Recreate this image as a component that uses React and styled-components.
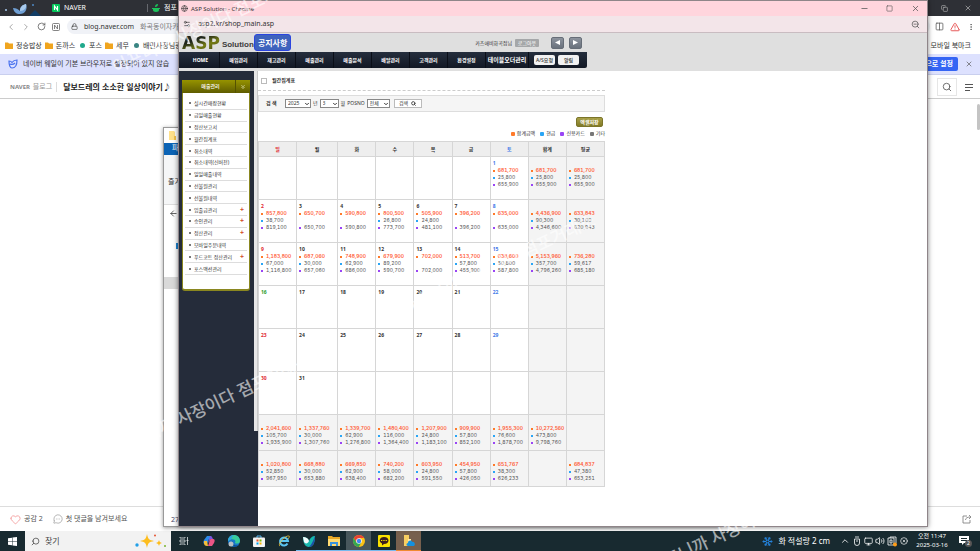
import React from "react";
import styled, { createGlobalStyle } from "styled-components";
import {
  AlertTriangle,
  ArrowLeft,
  ChevronDown,
  ChevronLeft,
  ChevronRight,
  ChevronUp,
  ChevronsDown,
  Columns2,
  Copy,
  Globe,
  Heart,
  Lock,
  MessageCircleMore,
  Minus,
  Monitor,
  MoreVertical,
  RotateCw,
  Search,
  Settings2,
  Snowflake,
  Square,
  Volume2,
  X,
  XCircle,
  ZoomOut,
} from "lucide-react";

const GlobalStyle = createGlobalStyle`
  * {
    box-sizing: border-box;
  }

  body {
    margin: 0;
    overflow: hidden;
    font-family: "Noto Sans", "Noto Sans CJK KR", sans-serif;
    font-size: 7px;
    line-height: 10px;
    color: #333;
  }

  button, input, select {
    font: inherit;
    margin: 0;
    padding: 0;
  }

  button {
    border: none;
    background: none;
    color: inherit;
    cursor: pointer;
  }

  a {
    color: inherit;
    text-decoration: none;
  }

  svg {
    flex: none;
    display: block;
  }
`;

const Screen = styled.div`
  position: relative;
  display: flex;
  flex-direction: column;
  height: 100vh;
  overflow: hidden;
`;

const Desktop = styled.div`
  position: relative;
  flex: 1;
  min-height: 0;
  display: flex;
`;

const Spacer = styled.span`
  flex: 1;
`;

const IconButton = styled.button`
  display: flex;
  align-items: center;
  justify-content: center;
  width: ${(p) => p.$width || 16}px;
  height: 12px;
  flex: none;
  color: ${(p) => p.$color || "#555"};
`;

/* Browser behind the popup */
const Browser = styled.div`
  flex: 1;
  min-width: 0;
  display: flex;
  flex-direction: column;
  background: #fff;
`;

const Bar = styled.div`
  display: flex;
  align-items: center;
  flex: none;
  white-space: nowrap;
`;

const TabBar = styled(Bar)`
  height: 16px;
  background: #2e3036;
  color: #fff;
`;

const WhaleBox = styled.div`
  display: flex;
  width: 52px;
`;

const Tab = styled.div`
  display: flex;
  align-items: center;
  gap: 4px;
  width: ${(p) => p.$width}px;
  height: 8px;
  border-right: 1px solid #66686e;
`;

const AddressBar = styled(Bar)`
  height: 21px;
  padding-left: 3px;
`;

const AddressField = styled.div`
  display: flex;
  align-items: center;
  flex: 1;
  gap: 6px;
  height: 15px;
  margin-left: 4px;
  padding-left: 4px;
  border-radius: 8px;
  background: #f0f2f7;
  color: #333;

  span {
    color: #777;
  }
`;

const BookmarkBar = styled(Bar)`
  height: 17px;
  padding: 0 9px 0 5px;
  gap: 3px;
`;

const Bookmark = styled.a`
  display: flex;
  align-items: center;
  gap: 3px;
`;

const Dot = styled.i`
  width: 5px;
  height: 5px;
  margin: 0 1px 0 2px;
  border-radius: 50%;
  background: ${(p) => p.$color};
`;

const NoticeBar = styled(Bar)`
  height: 21px;
  padding: 0 5px 0 8px;
  gap: 5px;
  border-bottom: 1px solid #c9cfee;
  background: #dde1fe;
`;

const PrimaryButton = styled.button`
  height: 14px;
  padding: 0 5px;
  border-radius: 2px;
  background: #3565f4;
  color: #fff;
  font-weight: 600;
`;

const BlogHeader = styled(Bar)`
  height: 24px;
  padding-left: 10px;
  border-bottom: 1px solid #ccc;
`;

const BlogBrand = styled.span`
  padding-right: 4px;
  border-right: 1px solid #ddd;
  color: #999;

  b {
    margin-right: 1px;
    font-size: 6px;
    color: #888;
  }
`;

const BlogTitle = styled.h1`
  margin: 0 0 0 6px;
  font-size: 8px;
  font-weight: 700;
  color: #222;
`;

const SearchBox = styled.div`
  display: flex;
  align-items: center;
  height: 18px;
  border: 1px solid #e6e6e6;
`;

const BlogContent = styled.div`
  flex: 1;
  display: flex;
  justify-content: flex-end;
  padding: 5px 0;
`;

const ScrollThumb = styled.div`
  width: 3px;
  height: 26px;
  border-radius: 2px;
  background: #c4c4c4;
`;

const BlogFooter = styled(Bar)`
  height: 25px;
  padding: 0 8px 0 10px;
  gap: 2px;
  border-top: 1px solid #ddd;
  color: #555;
`;

const FooterLink = styled.a`
  display: flex;
  align-items: center;
  gap: 3px;
  margin-right: 8px;
`;

/* File explorer, mostly covered */
const Explorer = styled.div`
  position: absolute;
  left: 163px;
  top: 127px;
  right: 260px;
  bottom: 4px;
  display: flex;
  flex-direction: column;
  border: 1px solid #999;
  background: #fff;
  box-shadow: 0 1px 4px rgba(0, 0, 0, 0.4);
  overflow: hidden;
`;

const ExplorerTitle = styled.div`
  display: flex;
  align-items: center;
  height: 15px;
  padding-left: 5px;
`;

const ExplorerTab = styled.div`
  height: 12px;
  padding-left: 8px;
  background: #0b63b5;
  color: #fff;
`;

const ExplorerRibbon = styled.div`
  height: 50px;
  padding: 22px 0 0 4px;
  border-bottom: 1px solid #ddd;
  background: #f5f6f7;
`;

const ExplorerNav = styled.div`
  display: flex;
  flex-direction: column;
  justify-content: space-between;
  height: 72px;
  padding: 4px 4px 28px 5px;
`;

const ExplorerMark = styled.div`
  width: 6px;
  height: 6px;
  margin-left: 7px;
  background: #1d84d2;
`;

const ExplorerRow = styled.div`
  height: 12px;
  background: #d9d9d9;
`;

const ExplorerStatus = styled.div`
  margin-top: auto;
  padding: 0 0 1px 7px;
  color: #446;
`;

/* Popup window */
const Popup = styled.div`
  position: absolute;
  left: 178px;
  top: 0;
  right: 52px;
  bottom: 4px;
  display: flex;
  flex-direction: column;
  border: 1px solid #8f8589;
  background: #fff;
  box-shadow: 0 0 5px rgba(0, 0, 0, 0.5);
`;

const PopupTitle = styled(Bar)`
  height: 15px;
  padding: 0 0 0 2px;
  gap: 3px;
  background: #ffd5dd;
  font-size: 6px;
`;

const PopupAddress = styled(Bar)`
  height: 17px;
  padding: 0 4px;
  gap: 7px;
  border-bottom: 1px solid #c9bcc1;
  background: #f3e5e9;
`;

const SiteHeader = styled.header`
  flex: none;
  height: 38px;
  background: #dfdfdf;
`;

const HeaderTop = styled.div`
  display: flex;
  align-items: center;
  height: 19px;
  width: 408px;
  padding: 0 5px 0 3px;
  font-size: 5px;
`;

const Logo = styled.a`
  display: flex;
  align-items: center;
  gap: 2px;
  color: #3c3c3c;
`;

const LogoMark = styled.strong`
  background: linear-gradient(160deg, #20261c 35%, #747b14 60%, #3d4215);
  background-clip: text;
  color: transparent;
  font: 700 17px/20px "DejaVu Sans", sans-serif;
`;

const LogoName = styled.span`
  padding-top: 4px;
  font: 700 8px/12px "Liberation Sans", sans-serif;
`;

const NoticeButton = styled.button`
  height: 17px;
  padding: 0 3px;
  border: 1px solid #2b45df;
  border-radius: 3px;
  background: #3e63bd;
  color: #fff;
  font-size: 8px;
  font-weight: 700;
`;

const LogoutButton = styled.button`
  width: 24px;
  height: 8px;
  margin: 0 7px 0 3px;
  border-radius: 1px;
  background: #a5a7a9;
  color: #fff;
  line-height: 8px;
`;

const ArrowButton = styled.button`
  display: flex;
  align-items: center;
  justify-content: center;
  width: 13px;
  height: 12px;
  margin-left: 5px;
  border: 1px solid #666d77;
  border-radius: 2px;
  background: linear-gradient(#8c939d, #69717c);
`;

const SiteNav = styled.nav`
  display: flex;
  align-items: center;
  width: 408px;
  height: 16px;
  padding-left: 3px;
  border-radius: 0 0 2px 0;
  background: linear-gradient(#252e3d, #121824);
  color: #fff;
  font-size: 5px;
  font-weight: 700;
`;

const NavLink = styled.a`
  width: ${(p) => (p.$wide ? 43 : 38)}px;
  height: 16px;
  border-right: 1px solid #0a0e17;
  font-size: ${(p) => (p.$wide ? 6 : 5)}px;
  line-height: 16px;
  text-align: center;
  white-space: nowrap;
`;

const NavButton = styled.button`
  width: 21px;
  height: 10px;
  margin-left: ${(p) => p.$gap}px;
  border-radius: 2px;
  background: #f2f2f2;
  color: #333;
  font-weight: 500;
`;

const SiteBody = styled.div`
  flex: 1;
  min-height: 0;
  display: flex;
`;

const Sidebar = styled.aside`
  display: flex;
  flex: none;
  width: 79px;
  background: #252c3a;
`;

const SideInner = styled.div`
  flex: 1;
  padding: 9px 4px 0 3px;
  font-size: 5px;
`;

const SideHandle = styled.div`
  width: 4px;
  height: 360px;
  border-right: 1px solid #c8c8c8;
  background: #e6e6e6;
`;

const SideTitle = styled.div`
  display: flex;
  align-items: center;
  height: 13px;
  background: linear-gradient(#969300, #5f5c00);
  color: #fff;
  font-weight: 500;

  span {
    flex: 1;
    padding-left: 4px;
    border-right: 1px solid #555200;
    line-height: 13px;
    text-align: center;
  }
`;

const SideList = styled.ul`
  display: grid;
  grid-auto-rows: 1fr;
  height: 198px;
  margin: 0;
  padding: 5px 2px 14px 2px;
  border: 1px solid #8a8720;
  border-top: none;
  border-bottom-width: 2px;
  border-radius: 0 0 3px 3px;
  background: #fff;
  list-style: none;
`;

const SideItem = styled.li`
  display: flex;
  align-items: center;
  gap: 3px;
  padding: 0 3px 0 4px;
  border-bottom: 1px solid #ddd;
  white-space: nowrap;

  &::before {
    content: "";
    width: 2px;
    height: 2px;
    background: #777;
  }

  b {
    margin-left: auto;
    color: #d2491f;
    font-size: 7px;
  }
`;

const Main = styled.main`
  flex: 1;
  max-width: 347px;
  font-size: 5px;
  line-height: 7px;
`;

const PageTitle = styled.label`
  display: flex;
  align-items: center;
  gap: 5px;
  height: 20px;
  padding-left: 3px;
  border-bottom: 1px dashed #ccc;
  font-weight: 700;
`;

const Checkbox = styled.input`
  appearance: none;
  width: 6px;
  height: 6px;
  border: 1px solid #bbb;
  background: #fff;
`;

const SearchForm = styled.form`
  display: flex;
  align-items: center;
  gap: 2px;
  height: 17px;
  margin-top: 4px;
  padding-left: 7px;
  border: 1px solid #ddd;
  background: #f5f5f5;
`;

const FormTitle = styled.b`
  width: 17px;
`;

const SelectWrap = styled.label`
  display: flex;
  align-items: center;
  gap: 2px;
`;

const SelectBox = styled.span`
  position: relative;

  svg {
    position: absolute;
    right: 1px;
    top: 2px;
    pointer-events: none;
  }
`;

const Select = styled.select`
  appearance: none;
  display: block;
  width: ${(p) => p.$width}px;
  height: 9px;
  padding: 0 2px;
  border: 1px solid #888;
  border-radius: 0;
  background: #fff;
  color: #333;
  line-height: 7px;
`;

const SearchButton = styled.button`
  display: flex;
  align-items: center;
  justify-content: center;
  gap: 3px;
  width: 28px;
  height: 9px;
  margin-left: 2px;
  border: 1px solid #bbb;
  background: #fff;
`;

const ExcelRow = styled.div`
  display: flex;
  justify-content: flex-end;
  padding: 5px 2px 0 0;
`;

const ExcelButton = styled.button`
  width: 27px;
  height: 10px;
  border: 1px solid #7b7529;
  border-radius: 2px;
  background: linear-gradient(#a8a048, #817a26);
  color: #fff;
  font-weight: 700;
  line-height: 8px;
`;

const Legend = styled.ul`
  display: flex;
  justify-content: flex-end;
  gap: 5px;
  margin: 0;
  padding: 3px 0 4px;
  list-style: none;
`;

const LegendItem = styled.li`
  display: flex;
  align-items: center;
  gap: 2px;

  &::before {
    content: "";
    width: 4px;
    height: 4px;
    border-radius: 1px;
    background: ${(p) => p.$color};
  }
`;

const Calendar = styled.table`
  width: 100%;
  table-layout: fixed;
  border-collapse: collapse;

  th, td {
    border: 1px solid #d6d6d6;
  }
`;

const DayHead = styled.th`
  width: ${(p) => (p.$wide ? 41 : 38)}px;
  height: 15px;
  padding: 0;
  background: #eee;
  color: ${(p) => p.$color || "#333"};
`;

const DayCell = styled.td`
  height: ${(p) => (p.$short ? 36 : 43)}px;
  padding: 2px 0 0 2px;
  background: ${(p) => (p.$shaded ? "#f4f4f4" : "#fff")};
  vertical-align: top;
`;

const DayNumber = styled.div`
  height: 8px;
  font-weight: 700;
  line-height: 8px;
  color: ${(p) => p.$color};
`;

const Amount = styled.div`
  display: flex;
  align-items: center;
  gap: 3px;
  height: 7px;
  font-family: Inter, sans-serif;
  font-variant-numeric: tabular-nums;
  color: ${(p) => (p.$total ? "#ff5a35" : "#555")};
  font-weight: ${(p) => (p.$total ? 600 : 400)};

  &::before {
    content: "";
    width: 2px;
    height: 2px;
    background: ${(p) => p.$dot};
  }
`;

/* Taskbar */
const Taskbar = styled.div`
  display: flex;
  align-items: stretch;
  flex: none;
  height: 20px;
  background: #182a30;
  color: #fff;
`;

const StartButton = styled.button`
  display: flex;
  align-items: center;
  justify-content: center;
  width: 25px;
`;

const TaskSearch = styled.label`
  display: flex;
  align-items: center;
  gap: 5px;
  width: 146px;
  padding: 0 4px 0 6px;
  background: #f2f2f2;
  color: #444;
  font-size: 8px;

  svg:first-child {
    transform: scaleX(-1);
  }

  input {
    flex: 1;
    min-width: 0;
    border: none;
    outline: none;
    background: transparent;

    &::placeholder {
      color: #444;
      opacity: 1;
    }
  }
`;

const TaskButton = styled.button`
  display: flex;
  align-items: center;
  justify-content: center;
  width: 25px;
  border-bottom: 1px solid ${(p) => p.$line || "transparent"};
  background: ${(p) => p.$bg || "transparent"};
`;

const Tray = styled.div`
  display: flex;
  align-items: center;
  gap: 2px;
  margin-left: auto;
  padding-right: 8px;
`;

const Weather = styled.span`
  display: flex;
  align-items: center;
  gap: 5px;
  margin-right: 8px;
  font-size: 8px;
`;

const Clock = styled.div`
  width: 44px;
  font-size: 6px;
  line-height: 9px;
  text-align: center;
`;

const Notifications = styled.button`
  position: relative;
  display: flex;
  width: 16px;
  justify-content: center;

  span {
    position: absolute;
    right: 0;
    top: 4px;
    width: 7px;
    height: 7px;
    border-radius: 50%;
    background: #555;
    color: #fff;
    font-size: 5px;
    line-height: 7px;
  }
`;

const Watermark = styled.div`
  position: absolute;
  left: ${(p) => p.$x}px;
  top: ${(p) => p.$y}px;
  transform: rotate(-25deg);
  transform-origin: 0 100%;
  color: rgba(255, 255, 255, 0.6);
  font-size: 17px;
  font-weight: 500;
  line-height: 20px;
  white-space: nowrap;
  pointer-events: none;
`;

const RED = "#e0262c";
const BLUE = "#3f78e8";
const GREEN = "#1f9b2d";
const DOTS = ["#ff7a2a", "#2aa5f5", "#9a45f5"];

const days = ["일", "월", "화", "수", "목", "금", "토", "합계", "평균"];

const first = ["681,700", "25,800", "655,900"];

const weeks = [
  {
    dates: ["", "", "", "", "", "", "1"],
    amounts: { 6: first, 7: first, 8: first },
  },
  {
    dates: ["2", "3", "4", "5", "6", "7", "8"],
    amounts: [
      ["857,800", "38,700", "819,100"],
      ["650,700", "", "650,700"],
      ["590,800", "", "590,800"],
      ["800,500", "26,800", "773,700"],
      ["505,900", "24,800", "481,100"],
      ["396,200", "", "396,200"],
      ["635,000", "", "635,000"],
      ["4,436,900", "90,300", "4,346,600"],
      ["633,843", "30,100", "620,943"],
    ],
  },
  {
    dates: ["9", "10", "11", "12", "13", "14", "15"],
    amounts: [
      ["1,183,800", "67,000", "1,116,800"],
      ["687,060", "30,000", "657,060"],
      ["748,900", "62,900", "686,000"],
      ["679,900", "89,200", "590,700"],
      ["702,000", "", "702,000"],
      ["513,700", "57,800", "455,900"],
      ["638,600", "50,800", "587,800"],
      ["5,153,960", "357,700", "4,796,260"],
      ["736,280", "59,617", "685,180"],
    ],
  },
  { dates: ["16", "17", "18", "19", "20", "21", "22"], amounts: [] },
  { dates: ["23", "24", "25", "26", "27", "28", "29"], amounts: [] },
  { dates: ["30", "31", "", "", "", "", ""], amounts: [] },
  {
    summary: true,
    dates: [],
    amounts: [
      ["2,041,600", "105,700", "1,935,900"],
      ["1,337,760", "30,000", "1,307,760"],
      ["1,339,700", "62,900", "1,276,800"],
      ["1,480,400", "116,000", "1,364,400"],
      ["1,207,900", "24,800", "1,183,100"],
      ["909,900", "57,800", "852,100"],
      ["1,955,300", "76,600", "1,878,700"],
      ["10,272,560", "473,800", "9,798,760"],
    ],
  },
  {
    summary: true,
    dates: [],
    amounts: [
      ["1,020,800", "52,850", "967,950"],
      ["668,880", "30,000", "653,880"],
      ["669,850", "62,900", "638,400"],
      ["740,200", "58,000", "682,200"],
      ["603,950", "24,800", "591,550"],
      ["454,950", "57,800", "426,050"],
      ["651,767", "38,300", "626,233"],
      null,
      ["684,837", "47,380", "653,251"],
    ],
  },
];

const navItems = ["HOME", "매입관리", "재고관리", "매출관리", "매출분석", "배달관리", "고객관리", "환경설정"];

const sideItems = [
  "실시간매장현황",
  "금일매출현황",
  "정산보고서",
  "월간집계표",
  "취소내역",
  "취소내역(신버전)",
  "일일매출내역",
  "선불원관리",
  "선불원내역",
  "입출금관리",
  "승인관리",
  "정산관리",
  "모바일주문내역",
  "푸드코트 정산관리",
  "포스액션관리",
];
const expandable = ["입출금관리", "승인관리", "정산관리", "푸드코트 정산관리"];

const legend = [
  ["합계금액", "#ff7a2a"],
  ["현금", "#2aa5f5"],
  ["신용카드", "#9a45f5"],
  ["기타", "#777"],
];

const marks = [
  [118, 57],
  [121, 438],
  [406, 298],
  [655, 557],
];

function dateColor(date, column) {
  if (date === "16") return GREEN;
  if (column === 0) return RED;
  if (column === 6) return BLUE;
  return "#333";
}

function FolderIcon({ color = "#f0a51f" }) {
  return (
    <svg width="8" height="7" viewBox="0 0 8 7">
      <path d="M0 0.500h3l1 1h4V7H0z" fill={color} />
    </svg>
  );
}

function DocumentsIcon() {
  return (
    <svg width="8" height="9" viewBox="0 0 8 9">
      <path d="M0 0h5l1 1v8H0z" fill="#ffe08a" />
      <path d="M5 5h2v4H5z" fill="#f3c24d" />
    </svg>
  );
}

function WhaleIcon() {
  return (
    <svg width="44" height="16" viewBox="0 0 44 16">
      <path d="M29 16l6-6 6 6z" fill="#123d66" />
      <circle cx="6" cy="10" r="1" fill="#a9c9ec" />
      <circle cx="33" cy="5" r="1" fill="#4e87c5" />
      <path d="M13 8c3 0 5 1 7 3 0-4 2-6 6-7 2 5-1 10-6 10-4 0-6-2-7-6z" fill="#6f9fd4" />
      <path d="M20 11c0-4 2-6 6-7 1 4-2 7-6 7z" fill="#a9caec" />
    </svg>
  );
}

function WhaleOutline() {
  return (
    <svg width="10" height="10" viewBox="0 0 10 10" fill="none" stroke="#4a72ee" strokeWidth="1.200">
      <path d="M1 2c1 0 2 0 3 1.500C5 2 7 1 9 1c0 5-2 8-5 8C2 9 1 6 1 2zM2 5c2 1 4 0 5-1" />
    </svg>
  );
}

function NaverIcon() {
  return (
    <svg width="8" height="8" viewBox="0 0 8 8">
      <rect width="8" height="8" rx="1" fill="#03c75a" />
      <path d="M2.500 6V2l3 4V2" fill="none" stroke="#fff" strokeWidth="1.200" />
    </svg>
  );
}

function PotIcon() {
  return (
    <svg width="8" height="8" viewBox="0 0 8 8" fill="#1cc35b">
      <path d="M1 4h6v2c0 1-1 2-3 2S1 7 1 6zM0 4h8v1H0zM3 3c0-2 1-3 3-3 0 2-1 3-3 3z" />
    </svg>
  );
}

function LinesIcon() {
  return (
    <svg width="8" height="8" viewBox="0 0 8 8" fill="none" stroke="#555">
      <path d="M0 1.500h8M0 4.500h8M0 7.500h5" />
    </svg>
  );
}

function ShareIcon() {
  return (
    <svg width="10" height="10" viewBox="0 0 10 10" fill="none" stroke="#777" strokeWidth=".8">
      <path d="M5 2H1v7h7V6M3.500 6c0-2 2-3 5-3M7 1l2 2-2 2" />
    </svg>
  );
}

function WindowsIcon() {
  return (
    <svg width="9" height="9" viewBox="0 0 9 9" fill="#fff">
      <path d="M0 1.300l4-.6v3.500H0zM4.500.6L9 0v4.200H4.500zM0 4.800h4v3.500l-4-.6zM4.500 4.800H9V9l-4.500-.6z" />
    </svg>
  );
}

function SparkleIcon() {
  return (
    <svg width="32" height="16" viewBox="0 0 32 16">
      <path d="M12 1c1 5 2 6 7 7-5 1-6 2-7 7-1-5-2-6-7-7 5-1 6-2 7-7z" fill="#fdbd1d" />
      <path d="M24 7c.6 2 1 2.500 3 3-2 .5-2.400 1-3 3-.6-2-1-2.500-3-3 2-.5 2.400-1 3-3z" fill="#fdbd1d" />
      <circle cx="2" cy="12" r="1.700" fill="#22a0e8" />
      <circle cx="20" cy="2.500" r="1" fill="#e55331" />
      <circle cx="30" cy="13" r="1" fill="#7bb52c" />
    </svg>
  );
}

function TaskViewIcon() {
  return (
    <svg width="10" height="10" viewBox="0 0 10 10" fill="none" stroke="#dfe5e7" strokeWidth=".8">
      <path d="M1 1v1h5V1M1 9V8h5v1M1 4h5v2H1zM8.500 1v8M7.500 4.500h2" />
    </svg>
  );
}

function CopilotIcon() {
  return (
    <svg width="12" height="12" viewBox="0 0 12 12">
      <path d="M4 1h4l1 3H6L4 9H2C0 9 0 7 1 5z" fill="#2d8be8" />
      <path d="M1 6h3l1 5H4C2 11 1 10 1 8z" fill="#f5bd3a" />
      <path d="M7 1c2 0 2 1 3 3-3 0-3 1-4 3l-1 1z" fill="#7b55e0" />
      <path d="M8 4h2c2 0 2 2 1 4l-2 3H5l1-3c1-3 1-4 2-4z" fill="#ec5585" />
    </svg>
  );
}

function EdgeIcon() {
  return (
    <svg width="12" height="12" viewBox="0 0 12 12">
      <circle cx="6" cy="6" r="6" fill="#1778c9" />
      <path d="M0 6c0-8 12-8 12 0 0 3-4 3-5 2 2-4-4-5-7-2z" fill="#38cc9b" />
      <path d="M0 6c0-4 3-6 6-6C3 2 5 3 2 5z" fill="#2fa4e0" />
      <path d="M5 6c-1 3 2 5 6 4-3 3-8 2-8-2z" fill="#0b5094" />
      <circle cx="3" cy="9" r="2.500" fill="#b7c0c6" />
    </svg>
  );
}

function StoreIcon() {
  return (
    <svg width="12" height="12" viewBox="0 0 12 12">
      <path d="M4 3V1h4v2" fill="none" stroke="#5bb7ee" />
      <rect y="2.500" width="12" height="9.500" rx="1" fill="#f4f4f4" />
      <path d="M3.500 4.500h2v2h-2z" fill="#ef5027" />
      <path d="M6.500 4.500h2v2h-2z" fill="#7db900" />
      <path d="M3.500 7.500h2v2h-2z" fill="#00a3ee" />
      <path d="M6.500 7.500h2v2h-2z" fill="#fdb800" />
    </svg>
  );
}

function ExplorerEIcon() {
  return (
    <svg width="12" height="12" viewBox="0 0 12 12" fill="none">
      <path d="M9.500 8.500A4 4 0 1 1 10 6H3" stroke="#5bc5f2" strokeWidth="2" />
      <path d="M2 11C-1 10 7 0 11 1c1 0 0 2-1 3" stroke="#f4c63a" strokeWidth=".8" />
    </svg>
  );
}

function WhaleAppIcon() {
  return (
    <svg width="12" height="12" viewBox="0 0 12 12">
      <path d="M0 2c3 0 5 1 6 4 1-3 3-5 6-5 0 7-2 11-6 11S0 8 0 2z" fill="#17b8ae" />
      <path d="M0 2c3 0 5 1 6 4-1 3-4 3-5 1z" fill="#f2fbfb" />
      <path d="M12 1c0 7-2 11-6 11 3-3 4-6 6-11z" fill="#1d4fa8" />
    </svg>
  );
}

function FilesIcon() {
  return (
    <svg width="12" height="10" viewBox="0 0 12 10">
      <path d="M0 0h4l1 1h7v9H0z" fill="#e9a826" />
      <path d="M0 3h12v7H0z" fill="#ffdb72" />
      <path d="M2 10V6h8v4H8V8H4v2z" fill="#3a92dc" />
    </svg>
  );
}

function ChromeIcon() {
  return (
    <svg width="12" height="12" viewBox="0 0 12 12">
      <circle cx="6" cy="6" r="6" fill="#fbc116" />
      <path d="M.8 3A6 6 0 0 1 11.200 3H6L3.500 7.500z" fill="#ea4335" />
      <path d="M.8 3a6 6 0 0 0 5 9l2.500-4.500H3.500z" fill="#34a853" />
      <circle cx="6" cy="6" r="2.800" fill="#fff" />
      <circle cx="6" cy="6" r="2.200" fill="#4285f4" />
    </svg>
  );
}

function TalkIcon() {
  return (
    <svg width="12" height="12" viewBox="0 0 12 12">
      <rect width="12" height="12" rx="1" fill="#fae100" />
      <path d="M6 2c6 0 6 7 0 7L4 10.500V8.500C.5 7 1 2 6 2z" fill="#3b1e1e" />
      <path d="M3 5.500h6" stroke="#fae100" strokeDasharray="1 .7" />
    </svg>
  );
}

function CloudFileIcon() {
  return (
    <svg width="12" height="12" viewBox="0 0 12 12">
      <path d="M1 0h5v11H1z" fill="#f8ce62" />
      <path d="M5 4h3v7H5z" fill="#ffe7a6" />
      <path d="M5 11c-2 0-2-3 0-3 0-3 4-3 4-1 3-1 4 4 1 4z" fill="#1490df" />
    </svg>
  );
}

const tasks = [
  { name: "작업 보기", icon: <TaskViewIcon /> },
  { name: "Copilot", icon: <CopilotIcon /> },
  { name: "Edge", icon: <EdgeIcon /> },
  { name: "Store", icon: <StoreIcon /> },
  { name: "Internet Explorer", icon: <ExplorerEIcon /> },
  { name: "Whale", icon: <WhaleAppIcon />, line: "#76b9ed" },
  { name: "파일 탐색기", icon: <FilesIcon />, line: "#76b9ed" },
  { name: "Chrome", icon: <ChromeIcon />, line: "#76b9ed", bg: "#48575c" },
  { name: "Talk", icon: <TalkIcon />, line: "#76b9ed" },
  { name: "OneDrive", icon: <CloudFileIcon />, line: "#f08a32", bg: "#77604e" },
];

function BrowserWindow() {
  return (
    <Browser>
      <TabBar>
        <WhaleBox>
          <WhaleIcon />
        </WhaleBox>
        <Tab $width={96}>
          <NaverIcon /> NAVER
        </Tab>
        <Tab $width={60}>
          <span />
          <PotIcon /> 점포
        </Tab>
        <Spacer />
        <IconButton $width={24} $color="#bbb" aria-label="Restore">
          <Copy size={7} />
        </IconButton>
        <IconButton $width={24} $color="#bbb" aria-label="Close">
          <X size={8} />
        </IconButton>
      </TabBar>
      <AddressBar>
        <IconButton $width={15} $color="#999" aria-label="Back">
          <ChevronLeft size={10} />
        </IconButton>
        <IconButton $width={15} $color="#999" aria-label="Forward">
          <ChevronRight size={10} />
        </IconButton>
        <IconButton aria-label="Reload">
          <RotateCw size={9} />
        </IconButton>
        <IconButton $width={14} aria-label="Naver">
          <svg width="8" height="8" viewBox="0 0 8 8" fill="none" stroke="#666" strokeWidth=".8">
            <rect x=".5" y=".5" width="7" height="7" rx="1" />
            <path d="M2.500 6V2l3 4V2" />
          </svg>
        </IconButton>
        <AddressField>
          <Lock size={7} /> blog.naver.com <span>화곡동이자카</span>
        </AddressField>
        <IconButton $width={18} aria-label="Sidebar">
          <Columns2 size={9} />
        </IconButton>
        <IconButton $width={14} $color="#e23a3a" aria-label="Warning">
          <AlertTriangle size={10} />
        </IconButton>
        <IconButton $width={18} aria-label="More">
          <MoreVertical size={8} />
        </IconButton>
      </AddressBar>
      <BookmarkBar>
        <Bookmark href="#">
          <FolderIcon /> 정승밥상
        </Bookmark>
        <Bookmark href="#">
          <FolderIcon /> 돈까스
        </Bookmark>
        <Bookmark href="#">
          <Dot $color="#20a98c" /> 포스
        </Bookmark>
        <Bookmark href="#">
          <FolderIcon /> 세무
        </Bookmark>
        <Bookmark href="#">
          <Dot $color="#3a8583" /> 배민사장님광장
        </Bookmark>
        <Spacer />
        <Bookmark href="#">
          <FolderIcon /> 모바일 북마크
        </Bookmark>
      </BookmarkBar>
      <NoticeBar>
        <WhaleOutline />
        네이버 웨일이 기본 브라우저로 설정되어 있지 않습
        <Spacer />
        <PrimaryButton>기본으로 설정</PrimaryButton>
        <IconButton $width={12} aria-label="Dismiss">
          <X size={8} />
        </IconButton>
      </NoticeBar>
      <BlogHeader>
        <BlogBrand>
          <b>NAVER</b> 블로그
        </BlogBrand>
        <BlogTitle>달보드레의 소소한 일상이야기♪</BlogTitle>
        <Spacer />
        <SearchBox>
          <IconButton $width={18} aria-label="Search">
            <Search size={10} />
          </IconButton>
        </SearchBox>
        <IconButton $width={23} aria-label="Menu">
          <LinesIcon />
        </IconButton>
      </BlogHeader>
      <BlogContent>
        <ScrollThumb />
      </BlogContent>
      <BlogFooter>
        <FooterLink href="#">
          <Heart size={11} strokeWidth={1} color="#e84646" /> 공감 2
        </FooterLink>
        <FooterLink href="#">
          <MessageCircleMore size={10} strokeWidth={1} /> 첫 댓글을 남겨보세요
        </FooterLink>
        <Spacer />
        <ShareIcon />
      </BlogFooter>
    </Browser>
  );
}

function ExplorerWindow() {
  return (
    <Explorer>
      <ExplorerTitle>
        <DocumentsIcon />
      </ExplorerTitle>
      <ExplorerTab>파일</ExplorerTab>
      <ExplorerRibbon>즐겨찾기</ExplorerRibbon>
      <ExplorerNav>
        <ArrowLeft size={9} />
        <ExplorerMark />
      </ExplorerNav>
      <ExplorerRow />
      <ExplorerStatus>27개</ExplorerStatus>
    </Explorer>
  );
}

function Field({ width, value, label, name }) {
  return (
    <SelectWrap>
      <SelectBox>
        <Select $width={width} defaultValue={value} aria-label={name}>
          <option>{value}</option>
        </Select>
        <ChevronDown size={6} strokeWidth={4} />
      </SelectBox>
      {label}
    </SelectWrap>
  );
}

function SalesCalendar() {
  return (
    <Calendar>
      <thead>
        <tr>
          {days.map((day, i) => (
            <DayHead key={day} $wide={i === 1} $color={i < 7 && dateColor("", i)}>
              {day}
            </DayHead>
          ))}
        </tr>
      </thead>
      <tbody>
        {weeks.map((week, w) => (
          <tr key={w}>
            {days.map((day, i) => (
              <DayCell key={day} $short={week.summary} $shaded={week.summary || i > 6}>
                <DayNumber $color={dateColor(week.dates[i], i)}>{week.dates[i]}</DayNumber>
                {(week.amounts[i] || []).map((amount, n) => (
                  <Amount key={n} $total={n === 0} $dot={amount ? DOTS[n] : "transparent"}>
                    {amount}
                  </Amount>
                ))}
              </DayCell>
            ))}
          </tr>
        ))}
      </tbody>
    </Calendar>
  );
}

function PopupWindow() {
  return (
    <Popup>
      <PopupTitle>
        <Globe size={7} />
        <span>ASP Solution - Chrome</span>
        <Spacer />
        <IconButton $width={20} aria-label="Minimize">
          <Minus size={9} />
        </IconButton>
        <IconButton $width={24} aria-label="Maximize">
          <Square size={7} />
        </IconButton>
        <IconButton $width={23} aria-label="Close">
          <X size={9} />
        </IconButton>
      </PopupTitle>
      <PopupAddress>
        <Settings2 size={8} />
        <span>asp2.kr/shop_main.asp</span>
        <Spacer />
        <IconButton aria-label="Zoom">
          <ZoomOut size={9} />
        </IconButton>
      </PopupAddress>
      <SiteHeader>
        <HeaderTop>
          <Logo href="#">
            <LogoMark>ASP</LogoMark>
            <LogoName>Solution</LogoName>
          </Logo>
          <NoticeButton>공지사항</NoticeButton>
          <Spacer />
          카츠애비화곡점님
          <LogoutButton>로그아웃</LogoutButton>
          <ArrowButton aria-label="Previous">
            <svg width="5" height="5" viewBox="0 0 5 5">
              <path d="M0 2.500L5 0v5z" fill="#fff" />
            </svg>
          </ArrowButton>
          <ArrowButton aria-label="Next">
            <svg width="5" height="5" viewBox="0 0 5 5">
              <path d="M5 2.500L0 0v5z" fill="#fff" />
            </svg>
          </ArrowButton>
        </HeaderTop>
        <SiteNav>
          {navItems.map((item) => (
            <NavLink key={item} href="#">
              {item}
            </NavLink>
          ))}
          <NavLink href="#" $wide>
            테이블오더관리
          </NavLink>
          <NavButton $gap={5}>A/S요청</NavButton>
          <NavButton $gap={3}>알림</NavButton>
        </SiteNav>
      </SiteHeader>
      <SiteBody>
        <Sidebar>
          <SideInner>
            <SideTitle>
              <span>매출관리</span>
              <IconButton $width={14} $color="#e9e9b8" aria-label="Collapse">
                <ChevronsDown size={6} strokeWidth={3} />
              </IconButton>
            </SideTitle>
            <SideList>
              {sideItems.map((item) => (
                <SideItem key={item}>
                  <a href="#">{item}</a>
                  {expandable.includes(item) && <b>+</b>}
                </SideItem>
              ))}
            </SideList>
          </SideInner>
          <SideHandle />
        </Sidebar>
        <Main>
          <PageTitle>
            <Checkbox type="checkbox" /> 월간집계표
          </PageTitle>
          <SearchForm>
            <FormTitle>검 색</FormTitle>
            <Field width={26} value="2025" label="년" name="년" />
            <Field width={19} value="3" label="월" name="월" />
            <span>POSNO</span>
            <Field width={23} value="전체" name="POSNO" />
            <SearchButton type="button">
              검색 <Search size={5} strokeWidth={4} />
            </SearchButton>
          </SearchForm>
          <ExcelRow>
            <ExcelButton>엑셀저장</ExcelButton>
          </ExcelRow>
          <Legend>
            {legend.map(([label, color]) => (
              <LegendItem key={label} $color={color}>
                {label}
              </LegendItem>
            ))}
          </Legend>
          <SalesCalendar />
        </Main>
      </SiteBody>
    </Popup>
  );
}

function App() {
  return (
    <Screen>
      <GlobalStyle />
      <Desktop>
        <BrowserWindow />
        <ExplorerWindow />
        <PopupWindow />
      </Desktop>
      <Taskbar>
        <StartButton aria-label="Start">
          <WindowsIcon />
        </StartButton>
        <TaskSearch>
          <Search size={9} />
          <input placeholder="찾기" aria-label="찾기" />
          <SparkleIcon />
        </TaskSearch>
        {tasks.map((task) => (
          <TaskButton key={task.name} $line={task.line} $bg={task.bg} aria-label={task.name}>
            {task.icon}
          </TaskButton>
        ))}
        <Tray>
          <Weather>
            <Snowflake size={11} color="#2589e8" /> 화 적설량 2 cm
          </Weather>
          <ChevronUp size={10} />
          <svg width="10" height="10" viewBox="0 0 10 10" fill="none" stroke="#fff" strokeWidth=".8">
            <path d="M3 1h4M2.500 3h5v4a2 2 0 0 1-5 0zM4 5h2" />
          </svg>
          <Monitor size={9} />
          <Volume2 size={10} />
          <svg width="11" height="11" viewBox="0 0 11 11" fill="none" stroke="#fff" strokeWidth=".8">
            <path d="M1 2h6v7H1zM3 2V1h6v6M3 4h2v3H3z" />
            <circle cx="8" cy="8.500" r="2" fill="#ff9d17" stroke="none" />
          </svg>
          <XCircle size={8} />
          <Clock>
            오전 11:47
            <br />
            2025-03-16
          </Clock>
          <Notifications aria-label="Notifications">
            <svg width="10" height="10" viewBox="0 0 10 10">
              <path d="M0 0h10v7H5L3 9V7H0z" fill="#fff" />
              <path d="M2 2.500h6M2 4.500h6" stroke="#182a30" />
            </svg>
            <span>2</span>
          </Notifications>
        </Tray>
      </Taskbar>
      {marks.map(([x, y]) => (
        <Watermark key={x} $x={x} $y={y} aria-hidden="true">
          아프니까 사장이다 점포거래소
        </Watermark>
      ))}
    </Screen>
  );
}

export default App;
